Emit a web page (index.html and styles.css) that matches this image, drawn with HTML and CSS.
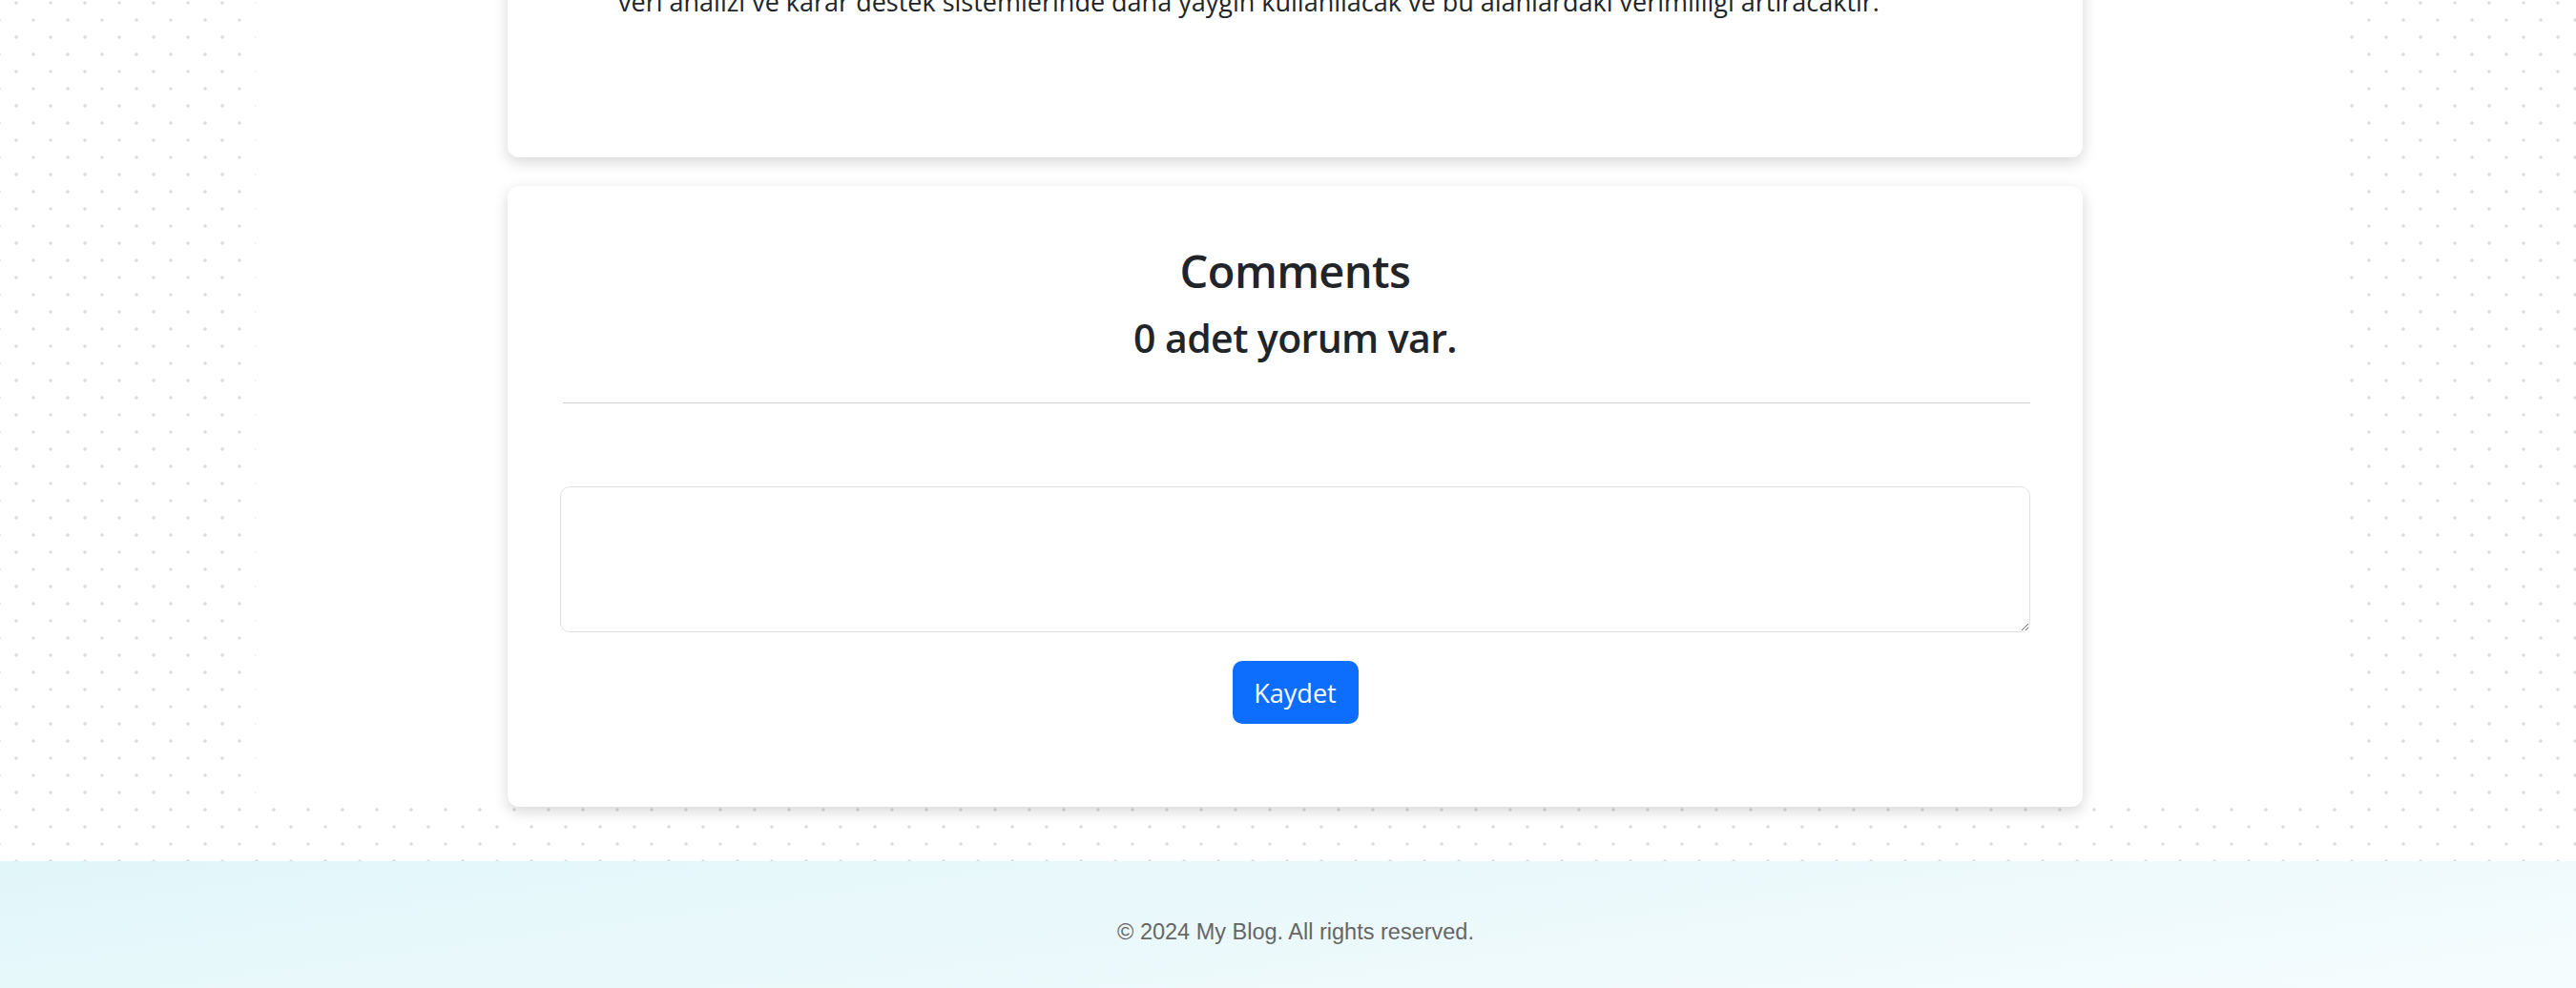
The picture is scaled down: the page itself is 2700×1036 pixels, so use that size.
FILE: index.html
```html
<!DOCTYPE html>
<html lang="tr">
<head>
<meta charset="utf-8">
<title>My Blog</title>
<link rel="stylesheet" href="styles.css">
</head>
<body>
<div class="page">
  <article class="card post-card">
    <p class="post-text">veri analizi ve karar destek sistemlerinde daha yaygın kullanılacak ve bu alanlardaki verimliliği artıracaktır.</p>
  </article>
  <section class="card comments-card">
    <h2 class="comments-title">Comments</h2>
    <h3 class="comments-count">0 adet yorum var.</h3>
    <hr class="divider">
    <form class="comment-form">
      <textarea class="comment-input"></textarea>
      <button class="btn-save" type="button">Kaydet</button>
    </form>
  </section>
</div>
<footer class="site-footer">
  <p>© 2024 My Blog. All rights reserved.</p>
</footer>
</body>
</html>
```
FILE: styles.css
```css
html, body {
  margin: 0;
  padding: 0;
}
body {
  font-family: "Open Sans", "Noto Sans", sans-serif;
  color: #212529;
  background-color: #fff;
  background-image:
    radial-gradient(circle, #dcdcdc 1.3px, rgba(220,220,220,0) 2px),
    radial-gradient(circle, #dcdcdc 1.3px, rgba(220,220,220,0) 2px);
  background-size: 36px 36px, 36px 36px;
  background-position: -1px -15px, 17px 3px;
  overflow: hidden;
}
.page {
  box-sizing: border-box;
  width: 2190px;
  margin: 0 0 57px 268px;
  padding: 0 275px 0 264px;
  background: #fff;
  display: flex;
  flex-direction: column;
  gap: 30px;
}
.card {
  background: #fff;
  border-radius: 12px;
  box-shadow: 0 5px 15px rgba(0, 0, 0, 0.16);
}
.post-card {
  margin-top: -48px;
  padding: 30px 55px 143px;
}
.post-text {
  margin: 0;
  padding-left: 61px;
  font-size: 27px;
  line-height: 40px;
  color: #212529;
  white-space: nowrap;
}
.comments-card {
  padding: 60px 55px 87px;
  text-align: center;
}
.comments-title {
  margin: 0;
  font-size: 47px;
  font-weight: 600;
  line-height: 58.8px;
  letter-spacing: -0.6px;
}
.comments-count {
  margin: 16px 0 0;
  font-size: 41px;
  font-weight: 600;
  line-height: 49.2px;
  letter-spacing: -0.6px;
}
.divider {
  margin: 43px 0 0 3px;
  height: 0;
  border: 0;
  border-top: 1px solid #cfcfcf;
}
.comment-form {
  margin-top: 87px;
  display: flex;
  flex-direction: column;
  align-items: center;
  gap: 30px;
}
.comment-input {
  box-sizing: border-box;
  width: 100%;
  height: 153px;
  margin: 0;
  border: 1px solid #dee2e6;
  border-radius: 10px;
  background: #fff;
  resize: vertical;
  font-family: inherit;
}
.btn-save {
  height: 66px;
  width: 132px;
  padding: 0;
  border: 0;
  border-radius: 10px;
  background: #0d6efd;
  color: #fff;
  font-family: "Open Sans", "Noto Sans", sans-serif;
  font-size: 27px;
  font-weight: 400;
}
.site-footer {
  padding: 60px 0 64px 16px;
  text-align: center;
  background: linear-gradient(172deg, #e1f6f9 0%, #f6fcfe 100%);
}
.site-footer p {
  margin: 0;
  font-family: "Liberation Sans", Arial, sans-serif;
  font-size: 23.5px;
  line-height: 28px;
  color: #666;
}
```
